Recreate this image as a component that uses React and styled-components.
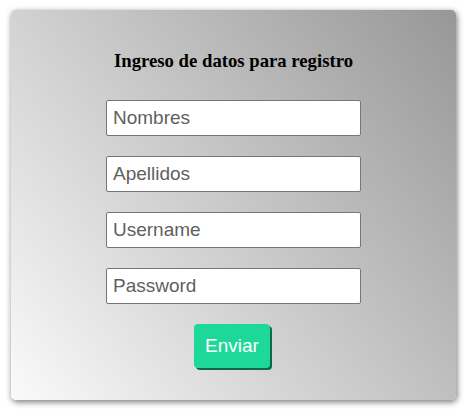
import React from 'react';
import styled, { createGlobalStyle } from 'styled-components';

const GlobalStyle = createGlobalStyle`
  body {
    margin: 0;
    background: #fff;
    font-family: "Liberation Sans", Arial, sans-serif;
  }
`;

const Page = styled.div`
  padding: 10px 14px 14px 11px;
`;

const Card = styled.form`
  width: 445px;
  height: 390px;
  box-sizing: border-box;
  border-radius: 5px;
  background: linear-gradient(52deg, #fafafa, #979797);
  box-shadow: 1px 2px 6px rgba(0, 0, 0, 0.55);
  padding-top: 41px;
  display: flex;
  flex-direction: column;
  align-items: center;
`;

const Title = styled.h3`
  margin: 0 0 29px;
  font-family: "Liberation Serif", "Times New Roman", serif;
  font-size: 18.72px;
  font-weight: bold;
  line-height: 20px;
  color: #000;
`;

const Fields = styled.div`
  display: flex;
  flex-direction: column;
  gap: 20px;
`;

const Input = styled.input`
  width: 255px;
  height: 36px;
  box-sizing: border-box;
  border: 1px solid #767676;
  border-radius: 2px;
  padding: 0 6px;
  font-family: "Liberation Sans", Arial, sans-serif;
  font-size: 19px;
  background: #fff;
  &::placeholder {
    color: #5f5f5f;
  }
`;

const Button = styled.button`
  margin: 20px 3px 0 0;
  width: 76px;
  height: 44px;
  border: none;
  border-radius: 4px;
  background: #1ed89a;
  color: #fff;
  font-family: "Liberation Sans", Arial, sans-serif;
  font-size: 19px;
  box-shadow: 2px 2px 0 #0b6b42;
  cursor: pointer;
`;

const fields = [
  { id: 'nombres', placeholder: 'Nombres', type: 'text' },
  { id: 'apellidos', placeholder: 'Apellidos', type: 'text' },
  { id: 'username', placeholder: 'Username', type: 'text' },
  { id: 'password', placeholder: 'Password', type: 'password' },
];

const App = () => {
  return (
    <>
      <GlobalStyle />
      <Page>
        <Card onSubmit={(e) => e.preventDefault()}>
          <Title>Ingreso de datos para registro</Title>
          <Fields>
            {fields.map(({ id, placeholder, type }) => (
              <Input key={id} name={id} type={type} placeholder={placeholder} />
            ))}
          </Fields>
          <Button type="submit">Enviar</Button>
        </Card>
      </Page>
    </>
  );
};

export default App;
